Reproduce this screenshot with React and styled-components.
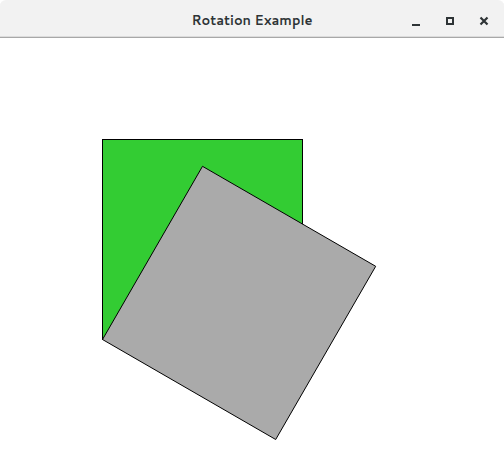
import React from "react";
import styled, { createGlobalStyle } from "styled-components";

const Global = createGlobalStyle`
  html, body { margin: 0; padding: 0; background: #ffffff; }
  body { width: 504px; height: 461px; overflow: hidden; }
`;

const Window = styled.div`
  width: 504px;
  height: 461px;
  display: flex;
  flex-direction: column;
  background: #ffffff;
`;

const TitleBar = styled.div`
  height: 37px;
  flex: none;
  display: grid;
  grid-template-columns: 1fr auto 1fr;
  align-items: center;
  background: #f2f2f2;
  border-bottom: 1px solid #a8a8a8;
  border-top-left-radius: 6px;
  border-top-right-radius: 6px;
  box-shadow: inset 0 -1px 0 #dcdcdc;
  font-family: "Cantarell", "Noto Sans", sans-serif;
`;

const Title = styled.div`
  grid-column: 2;
  font-size: 13px;
  font-weight: 700;
  color: #2e3436;
  padding-top: 2px;
`;

const Controls = styled.div`
  grid-column: 3;
  justify-self: end;
  display: flex;
  align-items: center;
  gap: 18px;
  padding-right: 12px;
  padding-top: 3px;
`;

const Ctl = styled.div`
  width: 16px;
  height: 16px;
  display: flex;
  align-items: center;
  justify-content: center;
`;

const Canvas = styled.div`
  flex: 1;
  background: #ffffff;
`;

export default function App() {
  const oy = 38;
  const pt = (x, y) => `${x},${y - oy}`;
  return (
    <>
      <Global />
      <Window>
        <TitleBar>
          <Title>Rotation Example</Title>
          <Controls>
            <Ctl>
              <svg width="16" height="16" viewBox="0 0 16 16">
                <rect x="4" y="12" width="8" height="2" fill="#2e3436" />
              </svg>
            </Ctl>
            <Ctl>
              <svg width="16" height="16" viewBox="0 0 16 16">
                <rect x="5" y="6" width="6" height="6" fill="none" stroke="#2e3436" strokeWidth="2" />
              </svg>
            </Ctl>
            <Ctl>
              <svg width="16" height="16" viewBox="0 0 16 16">
                <path d="M4.5 5.5 L11.5 12.5 M11.5 5.5 L4.5 12.5" stroke="#2e3436" strokeWidth="2.2" />
              </svg>
            </Ctl>
          </Controls>
        </TitleBar>
        <Canvas>
          <svg width="504" height="423" viewBox="0 0 504 423" style={{ display: "block" }}>
            <rect x="102.5" y={139.5 - oy} width="200" height="200" fill="#33cc33" stroke="#000" strokeWidth="1" />
            <polygon
              points={[pt(102.5, 339.5), pt(202.5, 166.3), pt(375.7, 266.3), pt(275.7, 439.5)].join(" ")}
              fill="#aaaaaa"
              stroke="#000"
              strokeWidth="1"
            />
          </svg>
        </Canvas>
      </Window>
    </>
  );
}
